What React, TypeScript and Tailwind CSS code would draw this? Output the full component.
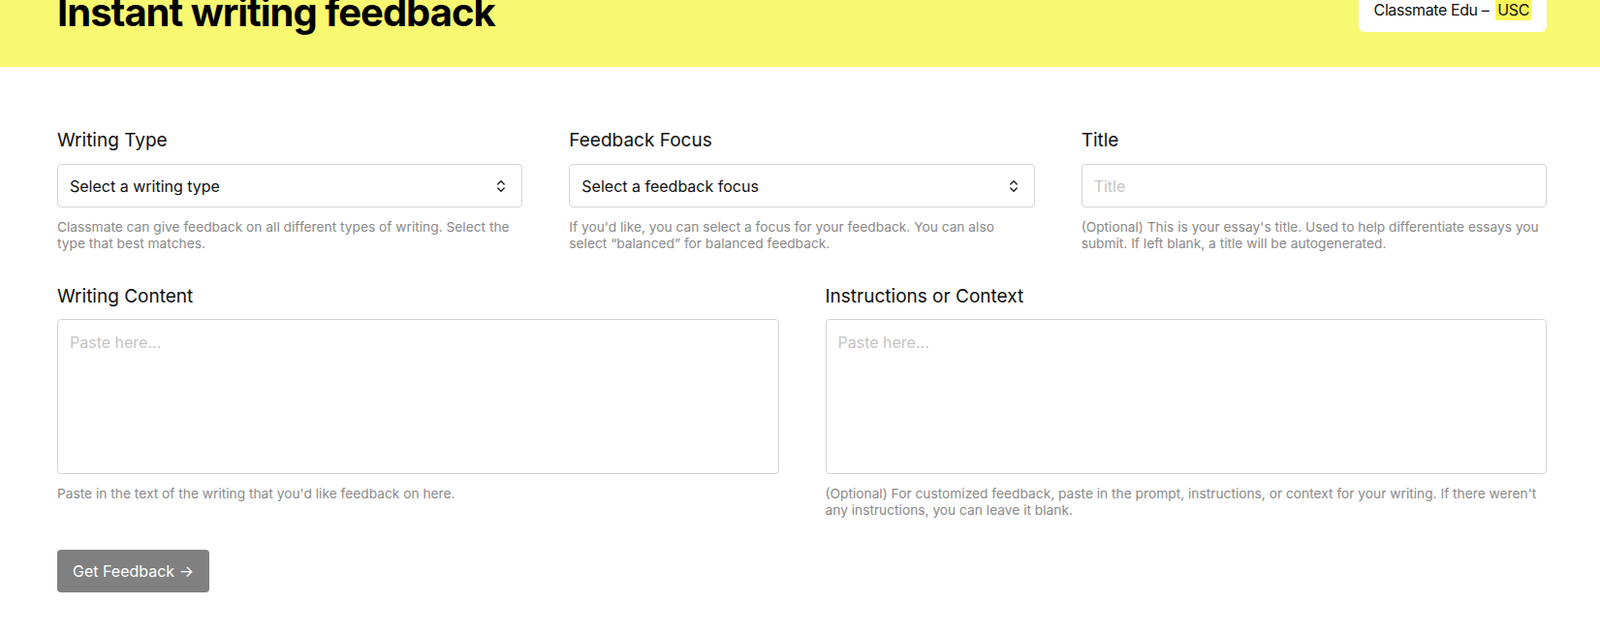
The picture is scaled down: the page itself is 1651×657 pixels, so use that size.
import React from "react";

function SortIcon() {
  return (
    <svg width="10" height="14" viewBox="0 0 10 14" fill="none" className="shrink-0">
      <path d="M1.8 5 L5 1.8 L8.2 5" stroke="#222" strokeWidth="1.5" strokeLinecap="round" strokeLinejoin="round" />
      <path d="M1.8 9 L5 12.2 L8.2 9" stroke="#222" strokeWidth="1.5" strokeLinecap="round" strokeLinejoin="round" />
    </svg>
  );
}

function Label({ children }: { children: React.ReactNode }) {
  return <label className="block text-[19px] leading-7 text-[#111]">{children}</label>;
}

function Help({ children }: { children: React.ReactNode }) {
  return <p className="mt-3 text-[13.75px] leading-[17px] text-[#8a8a8a]">{children}</p>;
}

function SelectField({ label, value, help }: { label: string; value: string; help: string }) {
  return (
    <div>
      <Label>{label}</Label>
      <button className="mt-2.5 flex h-[45px] w-full items-center justify-between rounded border border-[#d4d4d4] bg-white pl-3 pr-[16px] text-left text-base text-[#111]">
        <span>{value}</span>
        <SortIcon />
      </button>
      <Help>{help}</Help>
    </div>
  );
}

function AreaField({ label, help }: { label: string; help: string }) {
  return (
    <div>
      <Label>{label}</Label>
      <textarea
        placeholder="Paste here..."
        className="mt-[9px] block h-[160px] w-full resize-none rounded border border-[#d4d4d4] px-3 pt-[11px] text-base leading-6 text-[#111] placeholder:text-[#c4c4c4] focus:outline-none"
      />
      <Help>{help}</Help>
    </div>
  );
}

export default function App() {
  return (
    <div className="min-h-screen bg-white font-['Inter',sans-serif] text-[#111]">
      <header className="flex h-[69px] items-start justify-between overflow-hidden bg-[#f9f871] pl-[59px] pr-[55px]">
        <h1 className="-mt-[9px] text-[40px] font-bold leading-[44px] tracking-tight text-black">
          Instant writing feedback
        </h1>
        <div className="rounded-b-md bg-white px-4 pb-[13px] text-base leading-5 tracking-tight text-[#111]">
          Classmate Edu –
          <span className="ml-[7px] bg-[#f8f65a] px-0.5 pb-px">USC</span>
        </div>
      </header>

      <main className="pl-[59px] pr-[55px] pt-[62px]">
        <div className="grid grid-cols-3 gap-12">
          <SelectField
            label="Writing Type"
            value="Select a writing type"
            help="Classmate can give feedback on all different types of writing. Select the type that best matches."
          />
          <SelectField
            label="Feedback Focus"
            value="Select a feedback focus"
            help="If you'd like, you can select a focus for your feedback. You can also select “balanced” for balanced feedback."
          />
          <div>
            <Label>Title</Label>
            <input
              placeholder="Title"
              className="mt-2.5 block h-[45px] w-full rounded border border-[#d4d4d4] px-3 text-base placeholder:text-[#c4c4c4] focus:outline-none"
            />
            <Help>
              (Optional) This is your essay's title. Used to help differentiate essays you submit. If left blank, a title will be autogenerated.
            </Help>
          </div>
        </div>

        <div className="mt-[32px] grid grid-cols-2 gap-12">
          <AreaField
            label="Writing Content"
            help="Paste in the text of the writing that you'd like feedback on here."
          />
          <AreaField
            label="Instructions or Context"
            help="(Optional) For customized feedback, paste in the prompt, instructions, or context for your writing. If there weren't any instructions, you can leave it blank."
          />
        </div>

        <button className="mt-[32px] h-[44px] rounded bg-[#808080] px-4 text-base text-white">
          Get Feedback →
        </button>
      </main>
    </div>
  );
}
